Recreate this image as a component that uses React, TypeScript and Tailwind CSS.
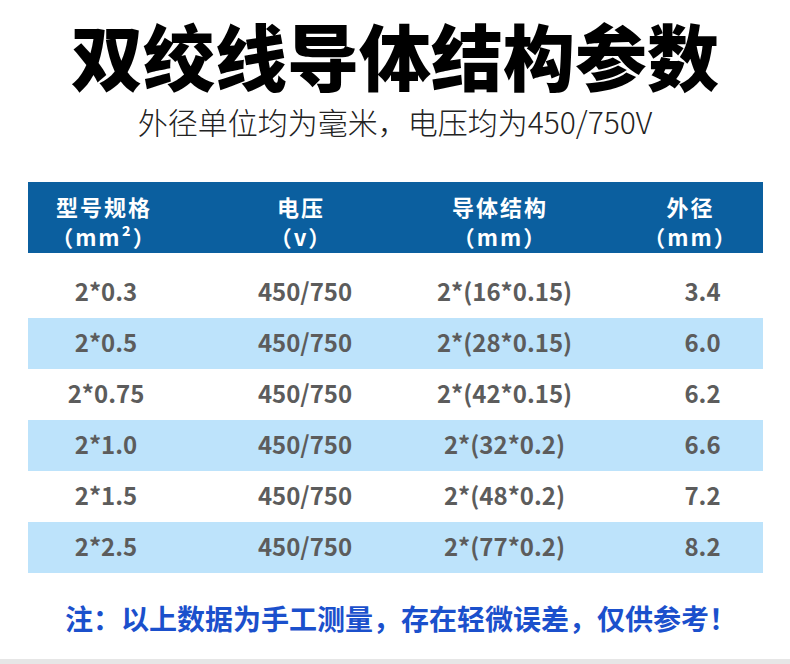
const rows = [
  ["2*0.3", "450/750", "2*(16*0.15)", "3.4"],
  ["2*0.5", "450/750", "2*(28*0.15)", "6.0"],
  ["2*0.75", "450/750", "2*(42*0.15)", "6.2"],
  ["2*1.0", "450/750", "2*(32*0.2)", "6.6"],
  ["2*1.5", "450/750", "2*(48*0.2)", "7.2"],
  ["2*2.5", "450/750", "2*(77*0.2)", "8.2"],
];

const headers = [
  ["型号规格", "（mm²）"],
  ["电压", "（v）"],
  ["导体结构", "（mm）"],
  ["外径", "（mm）"],
];

const headCols = ["w-[153px]", "w-[241px]", "w-[157px]", "flex-1 pl-[40px]"];
const dataCols = ["w-[157px]", "w-[241px]", "w-[158px]", "flex-1 pl-[59px]"];

export default function App() {
  return (
    <div className="flex h-[664px] w-[790px] flex-col items-center bg-white font-['Noto_Sans_CJK_SC',sans-serif]">
      {/* Title */}
      <h1 className="mt-[22px] h-[64px] text-[72px] font-black leading-[64px] text-black">
        双绞线导体结构参数
      </h1>

      <p className="mt-[22px] h-[26px] text-[30px] font-light leading-[26px] text-[#222]">
        外径单位均为毫米，电压均为450/750V
      </p>

      {/* Table */}
      <div className="mt-[48px] w-[735px]">
        <div className="flex h-[71px] items-start bg-[#0b5f9f] pt-[9px] text-white">
          {headers.map((h, i) => (
            <div
              key={i}
              className={`${headCols[i]} text-center text-[22px] font-bold leading-[30px] tracking-[2px]`}
            >
              <div>{h[0]}</div>
              <div>{h[1]}</div>
            </div>
          ))}
        </div>

        <div className="mt-[14px]">
          {rows.map((r, ri) => (
            <div
              key={ri}
              className={`flex h-[51px] items-center pb-[3px] text-[24px] font-semibold text-[#5c5c5c] ${
                ri % 2 === 1 ? "bg-[#bde3fb]" : "bg-white"
              }`}
            >
              {r.map((c, ci) => (
                <div key={ci} className={`${dataCols[ci]} text-center`}>
                  {c}
                </div>
              ))}
            </div>
          ))}
        </div>
      </div>

      {/* Note */}
      <p className="ml-[12px] mt-[31px] text-[28px] font-bold leading-none text-[#1b50cc]">
        注：以上数据为手工测量，存在轻微误差，仅供参考！
      </p>

      <div className="mt-auto h-[5px] w-full bg-[#e6e6e6]" />
    </div>
  );
}
